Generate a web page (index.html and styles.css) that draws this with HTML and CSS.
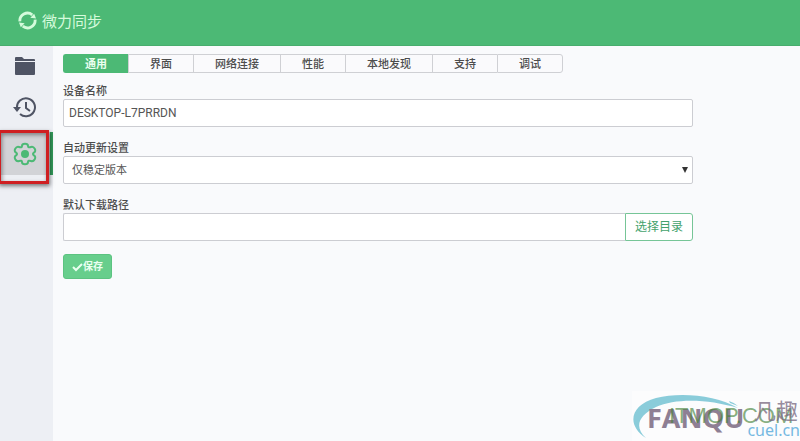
FILE: index.html
```html
<!DOCTYPE html>
<html lang="zh-CN">

<head>
    <meta charset="UTF-8">
    <meta name="viewport" content="width=device-width, initial-scale=1.0">
    <title>微力同步</title>
    <link rel="stylesheet" href="styles.css">
</head>

<body>
    <header class="header">
        <svg class="logo" viewBox="0 0 20 20" aria-hidden="true">
            <path d="M2 11A8 8 0 0 1 15 4" />
            <path d="M18 9A8 8 0 0 1 5 16" />
            <path class="logo-arrow" d="M13 7L17 3L19 8ZM7 13L3 17L1 12Z" />
        </svg>
        <span>微力同步</span>
    </header>

    <div class="layout">
        <nav class="sidebar">
            <a href="#files" class="side-item" aria-label="文件">
                <svg class="icon" viewBox="0 0 24 24">
                    <path fill="currentColor" d="M2 5V4Q2 3 3 3H9L11 5H21Q22 5 22 6V7H2ZM2 8H22V20Q22 21 21 21H3Q2 21 2 20Z" />
                </svg>
            </a>
            <a href="#history" class="side-item" aria-label="历史">
                <svg class="icon line" viewBox="0 0 24 24">
                    <path d="M4 12A9 9 0 1 1 7 18" />
                    <path d="M13 6V12L17 15" />
                    <path class="solid" d="M0 11H8L4 16Z" />
                </svg>
            </a>
            <a href="#settings" class="side-item active" aria-label="设置">
                <svg class="icon line" viewBox="0 0 24 24">
                    <path d="M9 4C9 1 15 1 15 4Q15 6 18 5C21 4 24 9 21 10.500Q19 12 21 13.500C24 15 21 20 18 19Q15 18 15 20C15 23 9 23 9 20Q9 18 6 19C3 20 0 15 3 13.500Q5 12 3 10.500C0 9 3 4 6 5Q9 6 9 4Z" />
                    <circle class="solid" cx="12" cy="12" r="4" />
                </svg>
            </a>
            <div class="marker"></div>
        </nav>

        <main class="content">
            <div class="tabs">
                <button type="button" class="tab selected">通用</button>
                <button type="button" class="tab">界面</button>
                <button type="button" class="tab">网络连接</button>
                <button type="button" class="tab">性能</button>
                <button type="button" class="tab">本地发现</button>
                <button type="button" class="tab">支持</button>
                <button type="button" class="tab">调试</button>
            </div>

            <form class="form">
                <div class="field">
                    <label for="deviceName">设备名称</label>
                    <input type="text" id="deviceName" class="control" value="DESKTOP-L7PRRDN">
                </div>
                <div class="field">
                    <label for="updateMode">自动更新设置</label>
                    <div class="select-wrap">
                        <select id="updateMode" class="control">
                            <option>仅稳定版本</option>
                        </select>
                        <svg class="caret" viewBox="0 0 6 6" aria-hidden="true">
                            <path d="M0 0H6L3 6Z" />
                        </svg>
                    </div>
                </div>
                <div class="field">
                    <label for="downloadPath">默认下载路径</label>
                    <div class="input-group">
                        <input type="text" id="downloadPath" class="control">
                        <button type="button" class="choose">选择目录</button>
                    </div>
                </div>
                <button type="button" class="save">
                    <svg class="check" viewBox="0 0 11 10" aria-hidden="true">
                        <path d="M1 5L4 8L10 2" />
                    </svg>
                    <span>保存</span>
                </button>
            </form>
        </main>
    </div>

    <!-- 右下角水印 -->
    <div class="watermark">
        <svg class="swoosh" viewBox="0 0 168 50" aria-hidden="true">
            <path d="M14 47C-6 34-2 14 24 7C48 1 84 4 106 17C76 8 44 7 24 16C6 25 2 36 14 47Z" />
            <path d="M97 10Q103 12 106 15L98 12Z" />
        </svg>
        <span class="wm-main">FANQU</span>
        <span class="wm-green">ITMOP.COM</span>
        <span class="wm-cn">凡趣</span>
        <span class="wm-site">cuel.cn</span>
    </div>
</body>

</html>
```
FILE: styles.css
```css
* {
    margin: 0;
    padding: 0;
    box-sizing: border-box;
}

body {
    display: flex;
    flex-direction: column;
    min-height: 100vh;
    font-family: "Liberation Sans", "Noto Sans CJK SC", sans-serif;
    font-size: 11px;
    color: #4c4c4c;
    background: #f9fafc;
}

button,
input,
select {
    font-family: inherit;
}

/* 顶部栏 */
.header {
    display: flex;
    align-items: center;
    gap: 5px;
    height: 46px;
    padding: 0 18px 4px;
    font-size: 15px;
    color: #d5fbdc;
    background: #4cb975;
    border-bottom: 1px solid #48ad6d;
}

.logo {
    width: 19px;
    height: 19px;
    fill: none;
    stroke: #d5fbdc;
    stroke-width: 3;
}

.logo .logo-arrow {
    fill: #d5fbdc;
    stroke: none;
}

.layout {
    display: flex;
    flex: 1;
}

/* 侧边栏 */
.sidebar {
    position: relative;
    width: 53px;
    background: #edeff4;
}

.side-item {
    display: flex;
    align-items: center;
    justify-content: center;
    height: 43px;
    padding-right: 3px;
    color: #4f5464;
}

.side-item:first-child {
    height: 40px;
}

.side-item.active {
    margin-top: 3px;
    color: #4cb975;
    background: #d2d3d7;
    border-right: 3px solid #33995a;
    padding-right: 0;
}

.icon {
    width: 24px;
    height: 24px;
}

.line {
    fill: none;
    stroke: currentColor;
    stroke-width: 2;
}

.line .solid {
    fill: currentColor;
    stroke: none;
}

.marker {
    position: absolute;
    top: 84px;
    left: -2px;
    width: 51px;
    height: 54px;
    border: 3px solid #cf1f22;
    box-shadow: 1px 2px 4px rgba(0, 0, 0, 0.5), inset 1px 2px 4px rgba(0, 0, 0, 0.4);
}

/* 内容区 */
.content {
    flex: 1;
    padding: 8px 10px;
}

.tabs {
    display: flex;
    margin-bottom: 10px;
}

.tab {
    height: 19px;
    padding: 0 21px;
    font-size: 11px;
    line-height: 16px;
    font-weight: 500;
    color: #4c4c4c;
    background: #fafafc;
    border: 1px solid #cfd0d4;
    border-right-width: 0;
}

.tab:first-child {
    border-radius: 3px 0 0 3px;
}

.tab:last-child {
    border-right-width: 1px;
    border-radius: 0 3px 3px 0;
}

.tab.selected {
    font-weight: 700;
    color: #eaffef;
    background: #4cb975;
    border-color: #4cb975;
}

.form {
    max-width: 630px;
}

.field {
    margin-bottom: 13px;
}

.field label {
    display: block;
    font-size: 11px;
    line-height: 16px;
    font-weight: 500;
}

.control {
    display: block;
    width: 100%;
    height: 28px;
    padding: 0 5px;
    font-family: Roboto, "Noto Sans CJK SC", sans-serif;
    font-size: 12px;
    color: #555;
    background: #fff;
    border: 1px solid #cccdd2;
    border-radius: 2px;
    outline: none;
}

.select-wrap {
    position: relative;
}

select.control {
    padding: 0 8px;
    font-size: 11px;
    appearance: none;
}

.caret {
    position: absolute;
    top: 11px;
    right: 5px;
    width: 6px;
    height: 6px;
    fill: #333;
    pointer-events: none;
}

.input-group {
    display: flex;
}

.input-group .control {
    flex: 1;
    border-right: 0;
    border-radius: 2px 0 0 2px;
}

.choose {
    height: 28px;
    padding: 0 9px;
    font-size: 12px;
    line-height: 24px;
    color: #43a26c;
    background: #fff;
    border: 1px solid #76c597;
    border-radius: 0 3px 3px 0;
}

.save {
    display: flex;
    align-items: center;
    height: 25px;
    padding: 0 8px;
    font-size: 10px;
    line-height: 20px;
    font-weight: 700;
    color: #eafff0;
    background: #67ce8c;
    border: 1px solid #5cc381;
    border-radius: 3px;
}

.check {
    width: 11px;
    height: 10px;
    fill: none;
    stroke: #eafff0;
    stroke-width: 2;
}

/* 水印 */
.watermark {
    position: fixed;
    right: 0;
    bottom: 0;
    width: 168px;
    height: 50px;
    background: #fcfcfd;
    overflow: hidden;
    white-space: nowrap;
}

.watermark span,
.swoosh {
    position: absolute;
}

.swoosh {
    width: 168px;
    height: 50px;
    fill: #8accda;
}

.watermark .wm-main {
    left: 15px;
    top: 12px;
    font: 700 27px/30px "Open Sans", sans-serif;
    color: #8e7f94;
}

.watermark .wm-green {
    left: 37px;
    top: 13px;
    font: 22px/24px "Liberation Sans", sans-serif;
    color: rgba(67, 130, 55, 0.65);
}

.watermark .wm-cn {
    right: 2px;
    top: 8px;
    font-size: 22px;
    line-height: 26px;
    color: rgba(125, 108, 132, 0.8);
}

.watermark .wm-site {
    right: 0;
    bottom: 2px;
    font: 16px/18px "Noto Sans", sans-serif;
    color: #76b9e2;
}
```
